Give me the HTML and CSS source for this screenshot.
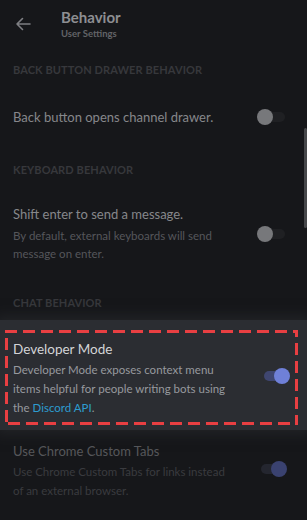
FILE: index.html
```html
<!DOCTYPE html>
<html lang="en">
<head>
<meta charset="utf-8">
<title>Behavior - User Settings</title>
<link rel="stylesheet" href="styles.css">
</head>
<body>
<div class="screen">
  <header class="topbar">
    <svg class="back" width="16" height="14" viewBox="0 0 16 14" aria-hidden="true">
      <path d="M15 7H2M7.5 1.5L2 7l5.5 5.5" fill="none" stroke="currentColor" stroke-width="1.6" stroke-linecap="round" stroke-linejoin="round"/>
    </svg>
    <div class="titles">
      <div class="title">Behavior</div>
      <div class="subtitle">User Settings</div>
    </div>
  </header>

  <div class="section-head">Back Button Drawer Behavior</div>
  <div class="row row-single">
    <div class="text"><div class="row-title">Back button opens channel drawer.</div></div>
    <div class="toggle"><span class="knob"></span></div>
  </div>

  <div class="section-head">Keyboard Behavior</div>
  <div class="row">
    <div class="text">
      <div class="row-title">Shift enter to send a message.</div>
      <div class="row-desc">By default, external keyboards will send<br>message on enter.</div>
    </div>
    <div class="toggle"><span class="knob"></span></div>
  </div>

  <div class="section-head">Chat Behavior</div>
  <div class="spotlight">
    <div class="focus-box">
      <div class="text">
        <div class="row-title">Developer Mode</div>
        <div class="row-desc">Developer Mode exposes context menu<br>items helpful for people writing bots using<br>the <span class="link">Discord API</span>.</div>
      </div>
      <div class="toggle on"><span class="knob"></span></div>
      <svg class="dashes" aria-hidden="true"><rect x="0" y="0" width="100%" height="100%"/></svg>
    </div>
  </div>

  <div class="row row-muted">
    <div class="text">
      <div class="row-title">Use Chrome Custom Tabs</div>
      <div class="row-desc">Use Chrome Custom Tabs for links instead<br>of an external browser.</div>
    </div>
    <div class="toggle on"><span class="knob"></span></div>
  </div>

  <div class="scrollbar"></div>
</div>
</body>
</html>
```

FILE: styles.css
```css
* { box-sizing: border-box; }
html, body { margin: 0; padding: 0; }
body {
  background: #16171a;
  font-family: Lato, "Noto Sans", "Liberation Sans", sans-serif;
  width: 307px;
  height: 520px;
  overflow: hidden;
}
.screen {
  position: relative;
  height: 520px;
  background: #16171a;
}
.topbar {
  height: 45px;
  display: flex;
  align-items: flex-start;
  padding-left: 15px;
}
.back {
  color: #7e7f83;
  margin-top: 17px;
}
.titles {
  margin-left: 30px;
  padding-top: 8px;
}
.title {
  font-size: 15px;
  font-weight: 700;
  color: #8d8e92;
  line-height: 18px;
}
.subtitle {
  font-size: 9.5px;
  font-weight: 700;
  color: #626367;
  line-height: 12px;
  margin-top: 2px;
}
.section-head {
  padding: 17px 13px 9px;
  line-height: 16px;
  font-size: 11px;
  font-weight: 700;
  text-transform: uppercase;
  color: #37383c;
  letter-spacing: 0.1px;
}
.row {
  display: flex;
  align-items: center;
  padding: 18px 20px 15px 13px;
}
.row-single { padding: 21px 20px 19px 13px; }
.text { flex: 1; }
.row-title {
  font-size: 13px;
  line-height: 18px;
  color: #86878b;
}
.row-desc {
  font-size: 11.5px;
  line-height: 18px;
  color: #55565a;
  margin-top: 4px;
}
.toggle {
  position: relative;
  width: 30px;
  height: 16px;
  flex: none;
}
.toggle::before {
  content: "";
  position: absolute;
  left: 6px;
  right: 2px;
  top: 3px;
  height: 10px;
  border-radius: 5px;
  background: #1f2023;
}
.knob {
  position: absolute;
  left: 0;
  top: 0;
  width: 16px;
  height: 16px;
  border-radius: 50%;
  background: #77787b;
}
.toggle.on::before { left: 4px; right: 6px; background: #3f4670; }
.toggle.on .knob { left: auto; right: 0; background: #6f80d8; }

.spotlight {
  background: #2b2d32;
  box-shadow: 0 0 12px 4px rgba(43, 45, 50, 0.55);
  padding: 10px 9px 5px 5px;
  position: relative;
}
.focus-box {
  position: relative;
  display: flex;
  align-items: center;
  height: 95px;
  padding: 10px 8px 8px 8px;
}
.focus-box .text { align-self: flex-start; }
.focus-box .row-title { color: #d3d4d7; font-size: 13.5px; }
.focus-box .row-desc { color: #97999e; margin-top: 2px; line-height: 19px; }
.focus-box .toggle { margin-bottom: 5px; }
.link { color: #2d9ccf; }
.dashes {
  position: absolute;
  inset: 0;
  width: 100%;
  height: 100%;
}
.dashes rect {
  fill: none;
  stroke: #e83f42;
  stroke-width: 6;
  stroke-dasharray: 12 6;
}
.row-muted { padding-top: 12px; }
.row-muted .row-title { color: #56575b; }
.row-muted .row-desc { color: #3a3b3f; margin-top: 2px; line-height: 19px; }
.row-muted .toggle { margin-bottom: 4px; }
.row-muted .toggle::before { background: #24262f; }
.row-muted .toggle .knob { background: #3a4270; }

.scrollbar {
  position: absolute;
  right: 0;
  top: 128px;
  width: 3px;
  height: 100px;
  border-radius: 2px;
  background: #46474a;
}
```
